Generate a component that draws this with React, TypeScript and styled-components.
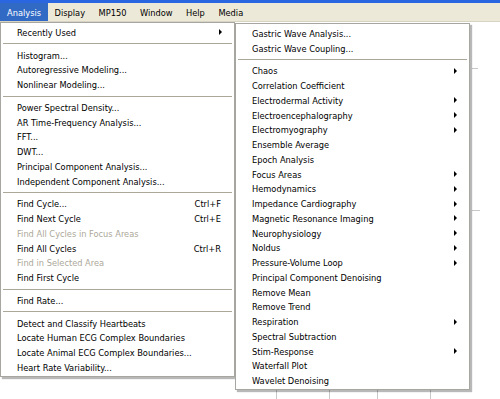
import React from 'react';
import styled, { createGlobalStyle } from 'styled-components';

const GlobalStyle = createGlobalStyle`
  html, body {
    margin: 0;
    padding: 0;
    background: #ffffff;
  }
  body {
    font-family: "DejaVu Sans Condensed", "Liberation Sans", sans-serif;
    font-size: 9.2px;
    color: #000000;
  }
`;

const Window = styled.div`
  position: relative;
  width: 500px;
  height: 399px;
  overflow: hidden;
  background: #ffffff;
  display: flex;
  flex-direction: column;
`;

const TitleStrip = styled.div`
  height: 3px;
  background: #2a66e0;
`;

const MenuBar = styled.div`
  height: 18px;
  background: #ece9d8;
  border-bottom: 1px solid #d8d4c4;
  display: flex;
  align-items: stretch;
`;

const MenuBarItem = styled.div<{ $active?: boolean }>`
  display: flex;
  align-items: center;
  padding: 0 6.5px 0 7px;
  background: ${({ $active }) => ($active ? '#316ac5' : 'transparent')};
  color: ${({ $active }) => ($active ? '#ffffff' : '#000000')};
`;

const Workspace = styled.div`
  flex: 1;
  position: relative;
`;

const Canvas = styled.svg`
  display: block;
  width: 100%;
  height: 100%;
`;

const Menu = styled.div<{ $left: number; $top: number; $width: number }>`
  position: absolute;
  left: ${({ $left }) => $left}px;
  top: ${({ $top }) => $top}px;
  width: ${({ $width }) => $width}px;
  box-sizing: border-box;
  background: #ffffff;
  border: 1px solid #a7a6a0;
  padding: 2px 0 1px;
  box-shadow: 2px 2px 1px rgba(0, 0, 0, 0.28);
`;

const Row = styled.div<{ $disabled?: boolean }>`
  display: flex;
  align-items: center;
  height: 14.75px;
  padding: 0 11px 0 16px;
  white-space: nowrap;
  color: ${({ $disabled }) => ($disabled ? '#aca899' : '#000000')};
`;

const Label = styled.span`
  flex: 1;
`;

const Shortcut = styled.span`
  margin-right: 2px;
`;

const Arrow = styled.span`
  width: 0;
  height: 0;
  border-top: 3px solid transparent;
  border-bottom: 3px solid transparent;
  border-left: 3px solid #000000;
  margin-right: 1px;
`;

const Separator = styled.div`
  height: 8px;
  display: flex;
  align-items: center;
  padding: 0 2px;

  &::after {
    content: '';
    flex: 1;
    height: 1px;
    background: #aca899;
  }
`;

type Entry =
  | { sep: true }
  | { label: string; shortcut?: string; sub?: boolean; disabled?: boolean };

const analysisItems: Entry[] = [
  { label: 'Recently Used', sub: true },
  { sep: true },
  { label: 'Histogram...' },
  { label: 'Autoregressive Modeling...' },
  { label: 'Nonlinear Modeling...' },
  { sep: true },
  { label: 'Power Spectral Density...' },
  { label: 'AR Time-Frequency Analysis...' },
  { label: 'FFT...' },
  { label: 'DWT...' },
  { label: 'Principal Component Analysis...' },
  { label: 'Independent Component Analysis...' },
  { sep: true },
  { label: 'Find Cycle...', shortcut: 'Ctrl+F' },
  { label: 'Find Next Cycle', shortcut: 'Ctrl+E' },
  { label: 'Find All Cycles in Focus Areas', disabled: true },
  { label: 'Find All Cycles', shortcut: 'Ctrl+R' },
  { label: 'Find in Selected Area', disabled: true },
  { label: 'Find First Cycle' },
  { sep: true },
  { label: 'Find Rate...' },
  { sep: true },
  { label: 'Detect and Classify Heartbeats' },
  { label: 'Locate Human ECG Complex Boundaries' },
  { label: 'Locate Animal ECG Complex Boundaries...' },
  { label: 'Heart Rate Variability...' },
];

const recentItems: Entry[] = [
  { label: 'Gastric Wave Analysis...' },
  { label: 'Gastric Wave Coupling...' },
  { sep: true },
  { label: 'Chaos', sub: true },
  { label: 'Correlation Coefficient' },
  { label: 'Electrodermal Activity', sub: true },
  { label: 'Electroencephalography', sub: true },
  { label: 'Electromyography', sub: true },
  { label: 'Ensemble Average' },
  { label: 'Epoch Analysis' },
  { label: 'Focus Areas', sub: true },
  { label: 'Hemodynamics', sub: true },
  { label: 'Impedance Cardiography', sub: true },
  { label: 'Magnetic Resonance Imaging', sub: true },
  { label: 'Neurophysiology', sub: true },
  { label: 'Noldus', sub: true },
  { label: 'Pressure-Volume Loop', sub: true },
  { label: 'Principal Component Denoising' },
  { label: 'Remove Mean' },
  { label: 'Remove Trend' },
  { label: 'Respiration', sub: true },
  { label: 'Spectral Subtraction' },
  { label: 'Stim-Response', sub: true },
  { label: 'Waterfall Plot' },
  { label: 'Wavelet Denoising' },
];

const menuBarItems = ['Analysis', 'Display', 'MP150', 'Window', 'Help', 'Media'];

const renderEntries = (entries: Entry[]) =>
  entries.map((item, index) =>
    'sep' in item ? (
      <Separator key={index} />
    ) : (
      <Row key={index} $disabled={item.disabled}>
        <Label>{item.label}</Label>
        {item.shortcut && <Shortcut>{item.shortcut}</Shortcut>}
        {item.sub && <Arrow />}
      </Row>
    )
  );

const App: React.FC = () => {
  return (
    <>
      <GlobalStyle />
      <Window>
        <TitleStrip />
        <MenuBar>
          {menuBarItems.map((name, index) => (
            <MenuBarItem key={name} $active={index === 0}>
              {name}
            </MenuBarItem>
          ))}
        </MenuBar>
        <Workspace>
          {/* faint chart grid of the window behind the menus */}
          <Canvas viewBox="0 0 500 377" preserveAspectRatio="none">
            <g stroke="#c8c8c8" strokeWidth="1">
              <line x1="276.5" y1="368" x2="276.5" y2="377" />
              <line x1="329.5" y1="368" x2="329.5" y2="377" />
              <line x1="377.5" y1="368" x2="377.5" y2="377" />
              <line x1="430.5" y1="368" x2="430.5" y2="377" />
              <line x1="472" y1="188.5" x2="480" y2="188.5" />
              <line x1="472" y1="46.5" x2="478" y2="46.5" />
            </g>
          </Canvas>
          <Menu $left={0} $top={0} $width={235}>
            {renderEntries(analysisItems)}
          </Menu>
          <Menu $left={235} $top={1} $width={235}>
            {renderEntries(recentItems)}
          </Menu>
        </Workspace>
      </Window>
    </>
  );
};

export default App;
